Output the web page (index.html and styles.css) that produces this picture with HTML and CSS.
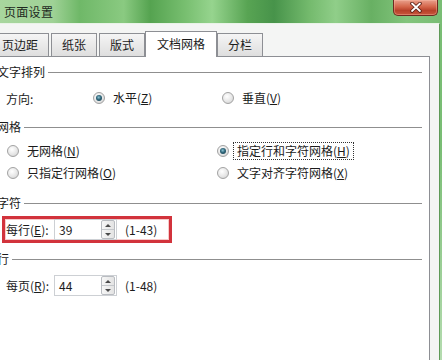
FILE: index.html
```html
<!DOCTYPE html>
<html lang="zh-CN">
<head>
  <meta charset="UTF-8" />
  <title>页面设置</title>
  <link rel="stylesheet" href="styles.css">
</head>
<body>
  <div class="window">
    <div class="titlebar">
      <span class="title">页面设置</span>
      <button class="close">
        <svg width="14" height="11" viewBox="0 0 14 11">
          <path d="M3 1.5 L11 9 M11 1.5 L3 9" stroke="#5b2016" stroke-width="3.6" stroke-linecap="round" fill="none"/>
          <path d="M3 1.5 L11 9 M11 1.5 L3 9" stroke="#fff" stroke-width="1.8" stroke-linecap="round" fill="none"/>
        </svg>
      </button>
    </div>

    <div class="client">
      <div class="tabs">
        <div class="tab">页边距</div>
        <div class="tab">纸张</div>
        <div class="tab">版式</div>
        <div class="tab active">文档网格</div>
        <div class="tab">分栏</div>
      </div>

      <div class="panel">
        <div class="group"><span>文字排列</span></div>
        <div class="row dir">
          <span class="lbl">方向:</span>
          <span class="opt"><i class="radio on"></i><span class="txt">水平(<u>Z</u>)</span></span>
          <span class="opt"><i class="radio"></i><span class="txt">垂直(<u>V</u>)</span></span>
        </div>

        <div class="group g-grid"><span>网格</span></div>
        <div class="row grid first">
          <span class="opt"><i class="radio"></i><span class="txt">无网格(<u>N</u>)</span></span>
          <span class="opt"><i class="radio on"></i><span class="txt focus">指定行和字符网格(<u>H</u>)</span></span>
        </div>
        <div class="row grid">
          <span class="opt"><i class="radio"></i><span class="txt">只指定行网格(<u>O</u>)</span></span>
          <span class="opt"><i class="radio"></i><span class="txt">文字对齐字符网格(<u>X</u>)</span></span>
        </div>

        <div class="group g-chars"><span>字符</span></div>
        <div class="field-row marked">
          <span class="flbl">每行(<u>E</u>):</span>
          <span class="field">
            <span class="value">39</span>
            <span class="spin"><b class="up"></b><b class="down"></b></span>
          </span>
          <span class="range">(1-43)</span>
        </div>

        <div class="group g-lines"><span>行</span></div>
        <div class="field-row">
          <span class="flbl">每页(<u>R</u>):</span>
          <span class="field">
            <span class="value">44</span>
            <span class="spin"><b class="up"></b><b class="down"></b></span>
          </span>
          <span class="range">(1-48)</span>
        </div>
      </div>
    </div>
  </div>
</body>
</html>
```

FILE: styles.css
```css
html, body {
  margin: 0;
  height: 100%;
  overflow: hidden;
}

body {
  font-family: "Noto Sans CJK SC", "Noto Sans", sans-serif;
  font-size: 12px;
  color: #1b1b1b;
  background: #cfe6cb;
}

.window {
  height: 100%;
  display: flex;
  flex-direction: column;
  background:
    linear-gradient(to bottom, rgba(255,255,255,0) 40%, rgba(220,240,215,0.6) 100%),
    linear-gradient(to right, #a8d69e 0%, #9fd296 12%, #6fb868 18%, #8aca81 28%, #55a350 34%, #78bf70 42%, #96d48e 48%, #58a453 56%, #47934a 62%, #74ba6d 70%, #90ce89 76%, #68b063 84%, #82c47c 92%, #79bd74 100%);
}

.titlebar {
  height: 23px;
  flex: none;
  display: flex;
  align-items: flex-start;
}

.title {
  padding: 4px 0 0 4px;
  line-height: 15px;
  letter-spacing: 0.3px;
  color: #1e2a1e;
}

.close {
  margin-left: auto;
  margin-right: 4px;
  width: 45px;
  height: 16px;
  padding: 0;
  border: 1px solid #6e2a20;
  border-top: none;
  border-radius: 0 0 5px 5px;
  background: linear-gradient(to bottom, #e9a08c 0%, #d4654a 45%, #b8412a 70%, #c8573c 100%);
  box-shadow: inset 0 0 0 1px rgba(255,200,180,0.35);
  display: flex;
  align-items: center;
  justify-content: center;
}

.client {
  flex: 1;
  min-height: 0;
  display: flex;
  flex-direction: column;
  margin: 0 2px 0 -11px;
  background: #f4f5f4;
  border-top: 1px solid #e9f3e7;
  border-right: 1px solid #5f9a58;
  padding-top: 7px;
}

.tabs {
  display: flex;
  flex: none;
  align-items: flex-end;
  padding-left: 2px;
  height: 25px;
}

.tab {
  height: 22px;
  line-height: 22px;
  padding: 0 10px;
  border: 1px solid #8d8f94;
  border-bottom: none;
  background: linear-gradient(to bottom, #f5f5f5, #dedede);
  white-space: nowrap;
}

.tab + .tab {
  margin-left: 2px;
}

.tab.active {
  position: relative;
  height: 25px;
  line-height: 24px;
  padding: 0 11px;
  margin-left: 0;
  margin-right: -2px;
  margin-bottom: -1px;
  background: #fff;
  z-index: 1;
}

.panel {
  flex: 1;
  overflow: hidden;
  margin-right: 9px;
  background: #fff;
  border-top: 1px solid #8d8f94;
  border-right: 1px solid #8d8f94;
  padding: 7px 7px 0 8px;
}

.group {
  display: flex;
  align-items: center;
  gap: 3px;
  height: 16px;
  line-height: 16px;
}

.group::after {
  content: "";
  flex: 1;
  height: 1px;
  background: #8f8f8f;
}

.g-grid { margin-top: 11px; }
.g-chars { margin-top: 12px; }
.g-lines { margin-top: 8px; }

.row {
  display: grid;
  align-items: center;
  height: 20px;
}

.row.dir {
  margin-top: 8px;
  padding-left: 9px;
  grid-template-columns: 87px 128px auto;
}

.row.grid {
  margin-top: 2px;
  padding-left: 10px;
  grid-template-columns: 210px auto;
}

.row.grid.first {
  margin-top: 6px;
}

.row.dir .opt:last-child {
  padding-left: 1px;
}

.opt {
  display: flex;
  align-items: center;
}

.txt {
  margin-left: 4px;
  padding: 0 3px;
  line-height: 16px;
  border: 1px dotted transparent;
  white-space: nowrap;
}

.txt.focus {
  border-color: #333;
}

.radio {
  position: relative;
  width: 10px;
  height: 10px;
  border-radius: 50%;
  border: 1px solid #a2a2a2;
  background: radial-gradient(circle at 40% 35%, #ffffff 0%, #e4e4e4 60%, #c9c9c9 100%);
  flex: none;
}

.radio.on::after {
  content: "";
  position: absolute;
  left: 2px;
  top: 2px;
  width: 6px;
  height: 6px;
  border-radius: 50%;
  background: radial-gradient(circle at 45% 40%, #8cc4d4 0%, #2f6579 45%, #173b49 100%);
}

.field-row {
  display: inline-flex;
  align-items: center;
  height: 21px;
  margin-top: 5px;
  margin-left: 5px;
  padding: 0 12px 0 1px;
  border: 3px solid transparent;
}

.field-row.marked {
  border-color: #d2333c;
  box-shadow: inset 0 0 0 1px rgba(240,150,150,0.5);
}

.flbl {
  width: 48px;
  white-space: nowrap;
}

.field {
  display: flex;
  align-items: center;
  width: 61px;
  height: 19px;
  border: 1px solid #cdd0d4;
  background: #fff;
}

.value {
  flex: 1;
  padding-left: 4px;
  line-height: 19px;
}

.spin {
  display: flex;
  flex-direction: column;
  width: 12px;
  height: 17px;
  margin-right: 1px;
  border: 1px solid #b9bcc1;
  border-radius: 2px;
  background: linear-gradient(to right, #f7f7f7, #e3e3e3);
}

.spin b {
  flex: 1;
  display: flex;
  align-items: center;
  justify-content: center;
}

.spin .up {
  border-bottom: 1px solid #c5c8cc;
}

.spin b::before {
  content: "";
  border-left: 3px solid transparent;
  border-right: 3px solid transparent;
}

.spin .up::before {
  border-bottom: 3px solid #4a4a4a;
}

.spin .down::before {
  border-top: 3px solid #4a4a4a;
}

.range {
  margin-left: 8px;
  white-space: nowrap;
}
```
